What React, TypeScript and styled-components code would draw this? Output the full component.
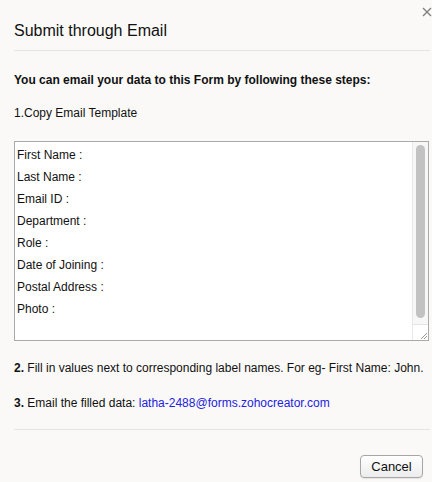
import styled, { createGlobalStyle } from 'styled-components';

const GlobalStyle = createGlobalStyle`
  html, body {
    margin: 0;
    padding: 0;
    background-color: #faf9f8;
  }
  body {
    font-family: "Liberation Sans", Arial, sans-serif;
    color: #111;
  }
`;

const Dialog = styled.div`
  display: flex;
  flex-direction: column;
  width: 432px;
  height: 482px;
  padding: 0 3px 0 14px;
  box-sizing: border-box;
`;

const Header = styled.header`
  display: flex;
  justify-content: space-between;
  align-items: flex-start;
  height: 50px;
  border-bottom: 1px solid #e6e4e2;
  margin-right: -1px;
`;

const Title = styled.h1`
  margin: 21px 0 0;
  font-size: 16px;
  font-weight: normal;
  line-height: 20px;
  color: #111;
`;

const CloseBtn = styled.button`
  display: flex;
  align-items: center;
  justify-content: center;
  width: 12px;
  height: 12px;
  margin: 6px -3px 0 0;
  padding: 0;
  border: none;
  background: none;
  cursor: pointer;
`;

const Body = styled.section`
  display: flex;
  flex-direction: column;
  padding-top: 21px;
`;

const Lead = styled.p`
  margin: 0;
  font-size: 12px;
  font-weight: bold;
  line-height: 16px;
`;

const Step = styled.p<{ $gap: number }>`
  margin: ${({ $gap }) => $gap}px 0 0;
  font-size: 12px;
  line-height: 16px;

  b {
    font-weight: bold;
  }
`;

const Link = styled.a`
  color: #2222dd;
  text-decoration: none;
`;

const TemplateBox = styled.div`
  display: flex;
  margin-top: 20px;
  height: 200px;
  border: 1px solid #aaa;
  background-color: #fff;
  box-sizing: border-box;
`;

const Lines = styled.div`
  flex: 1;
  display: flex;
  flex-direction: column;
  padding: 2px 2px;
`;

const Line = styled.div`
  font-size: 12px;
  line-height: 22px;
  color: #111;
`;

const ScrollTrack = styled.div`
  display: flex;
  flex-direction: column;
  width: 15px;
  border-left: 1px solid #e8e8e8;
  background-color: #f7f7f7;
`;

const ScrollArea = styled.div`
  flex: 1;
  display: flex;
  justify-content: center;
  padding: 3px 0 2px;
`;

const Thumb = styled.div`
  width: 9px;
  height: 173px;
  border-radius: 5px;
  background-color: #c2c2c2;
`;

const Grip = styled.div`
  display: flex;
  align-items: flex-end;
  justify-content: flex-end;
  height: 15px;
  border-top: 1px solid #e4e4e4;
  background-color: #fff;
`;

const Footer = styled.footer`
  display: flex;
  justify-content: flex-end;
  margin-top: 18px;
  padding-top: 25px;
  border-top: 1px solid #e6e4e2;
  margin-right: -1px;
`;

const CancelBtn = styled.button`
  width: 63px;
  height: 23px;
  margin-right: 7px;
  padding: 0;
  font-family: "Liberation Sans", Arial, sans-serif;
  font-size: 13px;
  color: #111;
  border: 1px solid #a6a6a6;
  border-radius: 4px;
  background: linear-gradient(#ffffff, #ececec);
  box-shadow: 0 1px 1px rgba(0, 0, 0, 0.08);
  cursor: pointer;
`;

const fields = [
  'First Name :',
  'Last Name :',
  'Email ID :',
  'Department :',
  'Role :',
  'Date of Joining :',
  'Postal Address :',
  'Photo :',
];

export default function App() {
  return (
    <>
      <GlobalStyle />
      <Dialog>
        <Header>
          <Title>Submit through Email</Title>
          <CloseBtn aria-label="Close">
            <svg width="10" height="10" viewBox="0 0 10 10">
              <path d="M1 1 L9 9 M9 1 L1 9" stroke="#808080" strokeWidth="1.4" />
            </svg>
          </CloseBtn>
        </Header>

        <Body>
          <Lead>You can email your data to this Form by following these steps:</Lead>
          <Step $gap={17}>1.Copy Email Template</Step>

          <TemplateBox>
            <Lines>
              {fields.map((f) => (
                <Line key={f}>{f}</Line>
              ))}
            </Lines>
            <ScrollTrack>
              <ScrollArea>
                <Thumb />
              </ScrollArea>
              <Grip>
                <svg width="10" height="10" viewBox="0 0 10 10">
                  <path d="M9 3 L3 9 M9 6 L6 9" stroke="#999" strokeWidth="1" />
                </svg>
              </Grip>
            </ScrollTrack>
          </TemplateBox>

          <Step $gap={19}>
            <b>2.</b> Fill in values next to corresponding label names. For eg- First Name: John.
          </Step>
          <Step $gap={19}>
            <b>3.</b> Email the filled data: <Link href="#">latha-2488@forms.zohocreator.com</Link>
          </Step>
        </Body>

        <Footer>
          <CancelBtn>Cancel</CancelBtn>
        </Footer>
      </Dialog>
    </>
  );
}
